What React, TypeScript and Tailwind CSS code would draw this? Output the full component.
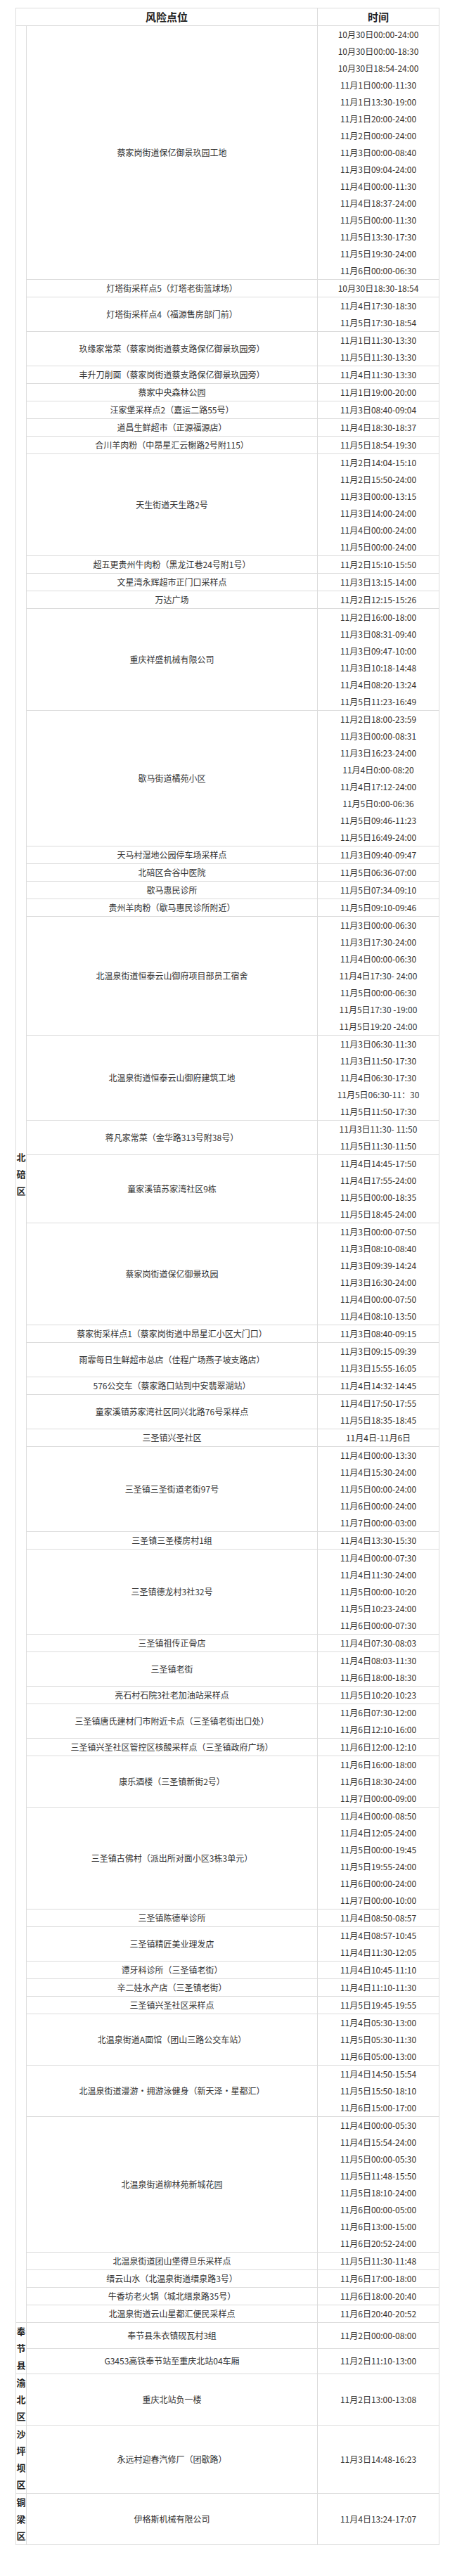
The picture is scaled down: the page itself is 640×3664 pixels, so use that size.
import React from 'react';

type Row = [string, string[]];
type Group = { district: string; rows: Row[] };

const groups: Group[] = [
  {
    district: '北碚区',
    rows: [
      ['蔡家岗街道保亿御景玖园工地', [
        '10月30日00:00-24:00', '10月30日00:00-18:30', '10月30日18:54-24:00',
        '11月1日00:00-11:30', '11月1日13:30-19:00', '11月1日20:00-24:00',
        '11月2日00:00-24:00', '11月3日00:00-08:40', '11月3日09:04-24:00',
        '11月4日00:00-11:30', '11月4日18:37-24:00', '11月5日00:00-11:30',
        '11月5日13:30-17:30', '11月5日19:30-24:00', '11月6日00:00-06:30',
      ]],
      ['灯塔街采样点5（灯塔老街篮球场）', ['10月30日18:30-18:54']],
      ['灯塔街采样点4（福源售房部门前）', ['11月4日17:30-18:30', '11月5日17:30-18:54']],
      ['玖缘家常菜（蔡家岗街道蔡支路保亿御景玖园旁）', ['11月1日11:30-13:30', '11月5日11:30-13:30']],
      ['丰升刀削面（蔡家岗街道蔡支路保亿御景玖园旁）', ['11月4日11:30-13:30']],
      ['蔡家中央森林公园', ['11月1日19:00-20:00']],
      ['汪家堡采样点2（嘉运二路55号）', ['11月3日08:40-09:04']],
      ['道昌生鲜超市（正源福源店）', ['11月4日18:30-18:37']],
      ['合川羊肉粉（中昂星汇云榭路2号附115）', ['11月5日18:54-19:30']],
      ['天生街道天生路2号', [
        '11月2日14:04-15:10', '11月2日15:50-24:00', '11月3日00:00-13:15',
        '11月3日14:00-24:00', '11月4日00:00-24:00', '11月5日00:00-24:00',
      ]],
      ['超五更贵州牛肉粉（黑龙江巷24号附1号）', ['11月2日15:10-15:50']],
      ['文星湾永辉超市正门口采样点', ['11月3日13:15-14:00']],
      ['万达广场', ['11月2日12:15-15:26']],
      ['重庆祥盛机械有限公司', [
        '11月2日16:00-18:00', '11月3日08:31-09:40', '11月3日09:47-10:00',
        '11月3日10:18-14:48', '11月4日08:20-13:24', '11月5日11:23-16:49',
      ]],
      ['歇马街道橘苑小区', [
        '11月2日18:00-23:59', '11月3日00:00-08:31', '11月3日16:23-24:00',
        '11月4日0:00-08:20', '11月4日17:12-24:00', '11月5日0:00-06:36',
        '11月5日09:46-11:23', '11月5日16:49-24:00',
      ]],
      ['天马村湿地公园停车场采样点', ['11月3日09:40-09:47']],
      ['北碚区合谷中医院', ['11月5日06:36-07:00']],
      ['歇马惠民诊所', ['11月5日07:34-09:10']],
      ['贵州羊肉粉（歇马惠民诊所附近）', ['11月5日09:10-09:46']],
      ['北温泉街道恒泰云山御府项目部员工宿舍', [
        '11月3日00:00-06:30', '11月3日17:30-24:00', '11月4日00:00-06:30',
        '11月4日17:30- 24:00', '11月5日00:00-06:30', '11月5日17:30 -19:00',
        '11月5日19:20 -24:00',
      ]],
      ['北温泉街道恒泰云山御府建筑工地', [
        '11月3日06:30-11:30', '11月3日11:50-17:30', '11月4日06:30-17:30',
        '11月5日06:30-11：30', '11月5日11:50-17:30',
      ]],
      ['蒋凡家常菜（金华路313号附38号）', ['11月3日11:30- 11:50', '11月5日11:30-11:50']],
      ['童家溪镇苏家湾社区9栋', [
        '11月4日14:45-17:50', '11月4日17:55-24:00', '11月5日00:00-18:35', '11月5日18:45-24:00',
      ]],
      ['蔡家岗街道保亿御景玖园', [
        '11月3日00:00-07:50', '11月3日08:10-08:40', '11月3日09:39-14:24',
        '11月3日16:30-24:00', '11月4日00:00-07:50', '11月4日08:10-13:50',
      ]],
      ['蔡家街采样点1（蔡家岗街道中昂星汇小区大门口）', ['11月3日08:40-09:15']],
      ['雨霏每日生鲜超市总店（佳程广场燕子坡支路店）', ['11月3日09:15-09:39', '11月3日15:55-16:05']],
      ['576公交车（蔡家路口站到中安翡翠湖站）', ['11月4日14:32-14:45']],
      ['童家溪镇苏家湾社区同兴北路76号采样点', ['11月4日17:50-17:55', '11月5日18:35-18:45']],
      ['三圣镇兴圣社区', ['11月4日-11月6日']],
      ['三圣镇三圣街道老街97号', [
        '11月4日00:00-13:30', '11月4日15:30-24:00', '11月5日00:00-24:00',
        '11月6日00:00-24:00', '11月7日00:00-03:00',
      ]],
      ['三圣镇三圣楼房村1组', ['11月4日13:30-15:30']],
      ['三圣镇德龙村3社32号', [
        '11月4日00:00-07:30', '11月4日11:30-24:00', '11月5日00:00-10:20',
        '11月5日10:23-24:00', '11月6日00:00-07:30',
      ]],
      ['三圣镇祖传正骨店', ['11月4日07:30-08:03']],
      ['三圣镇老街', ['11月4日08:03-11:30', '11月6日18:00-18:30']],
      ['亮石村石院3社老加油站采样点', ['11月5日10:20-10:23']],
      ['三圣镇唐氏建材门市附近卡点（三圣镇老街出口处）', ['11月6日07:30-12:00', '11月6日12:10-16:00']],
      ['三圣镇兴圣社区管控区核酸采样点（三圣镇政府广场）', ['11月6日12:00-12:10']],
      ['康乐酒楼（三圣镇新街2号）', ['11月6日16:00-18:00', '11月6日18:30-24:00', '11月7日00:00-09:00']],
      ['三圣镇古佛村（派出所对面小区3栋3单元）', [
        '11月4日00:00-08:50', '11月4日12:05-24:00', '11月5日00:00-19:45',
        '11月5日19:55-24:00', '11月6日00:00-24:00', '11月7日00:00-10:00',
      ]],
      ['三圣镇陈德举诊所', ['11月4日08:50-08:57']],
      ['三圣镇精匠美业理发店', ['11月4日08:57-10:45', '11月4日11:30-12:05']],
      ['谭牙科诊所（三圣镇老街）', ['11月4日10:45-11:10']],
      ['辛二娃水产店（三圣镇老街）', ['11月4日11:10-11:30']],
      ['三圣镇兴圣社区采样点', ['11月5日19:45-19:55']],
      ['北温泉街道A面馆（团山三路公交车站）', ['11月4日05:30-13:00', '11月5日05:30-11:30', '11月6日05:00-13:00']],
      ['北温泉街道漫游•拥游泳健身（新天泽•星都汇）', ['11月4日14:50-15:54', '11月5日15:50-18:10', '11月6日15:00-17:00']],
      ['北温泉街道柳林苑新城花园', [
        '11月4日00:00-05:30', '11月4日15:54-24:00', '11月5日00:00-05:30',
        '11月5日11:48-15:50', '11月5日18:10-24:00', '11月6日00:00-05:00',
        '11月6日13:00-15:00', '11月6日20:52-24:00',
      ]],
      ['北温泉街道团山堡得旦乐采样点', ['11月5日11:30-11:48']],
      ['缙云山水（北温泉街道缙泉路3号）', ['11月6日17:00-18:00']],
      ['牛香坊老火锅（城北缙泉路35号）', ['11月6日18:00-20:40']],
      ['北温泉街道云山星都汇便民采样点', ['11月6日20:40-20:52']],
    ],
  },
  {
    district: '奉节县',
    rows: [
      ['奉节县朱衣镇砚瓦村3组', ['11月2日00:00-08:00']],
      ['G3453高铁奉节站至重庆北站04车厢', ['11月2日11:10-13:00']],
    ],
  },
  { district: '渝北区', rows: [['重庆北站负一楼', ['11月2日13:00-13:08']]] },
  { district: '沙坪坝区', rows: [['永远村迎春汽修厂（团歇路）', ['11月3日14:48-16:23']]] },
  { district: '铜梁区', rows: [['伊格斯机械有限公司', ['11月4日13:24-17:07']]] },
];

const cell = 'border border-[#dcdcdc] p-0 text-center align-middle';

export default function App() {
  return (
    <div className="min-h-screen bg-white pt-[11px] pl-[22px] font-['Noto_Sans_CJK_SC',sans-serif] text-[#333]">
      <table className="w-[602px] table-fixed border-collapse text-[12px]">
        <colgroup>
          <col className="w-[15px]" />
          <col className="w-[414px]" />
          <col className="w-[173px]" />
        </colgroup>
        <thead>
          <tr className="h-[25px]">
            <th colSpan={2} className={`${cell} text-[15px] font-bold text-[#222]`}>风险点位</th>
            <th className={`${cell} text-[15px] font-bold text-[#222]`}>时间</th>
          </tr>
        </thead>
        <tbody>
          {groups.map(group =>
            group.rows.map(([place, times], i) => (
              <tr key={group.district + i}>
                {i === 0 && (
                  <td
                    rowSpan={group.rows.length}
                    className={`${cell} font-bold leading-[24px] text-[13px] text-[#222] break-all`}
                  >
                    {group.district}
                  </td>
                )}
                <td className={`${cell} leading-[24px] whitespace-nowrap`}>{place}</td>
                <td className={cell}>
                  {times.map(t => (
                    <div key={t} className="leading-[24px] whitespace-nowrap">{t}</div>
                  ))}
                </td>
              </tr>
            ))
          )}
        </tbody>
      </table>
    </div>
  );
}
